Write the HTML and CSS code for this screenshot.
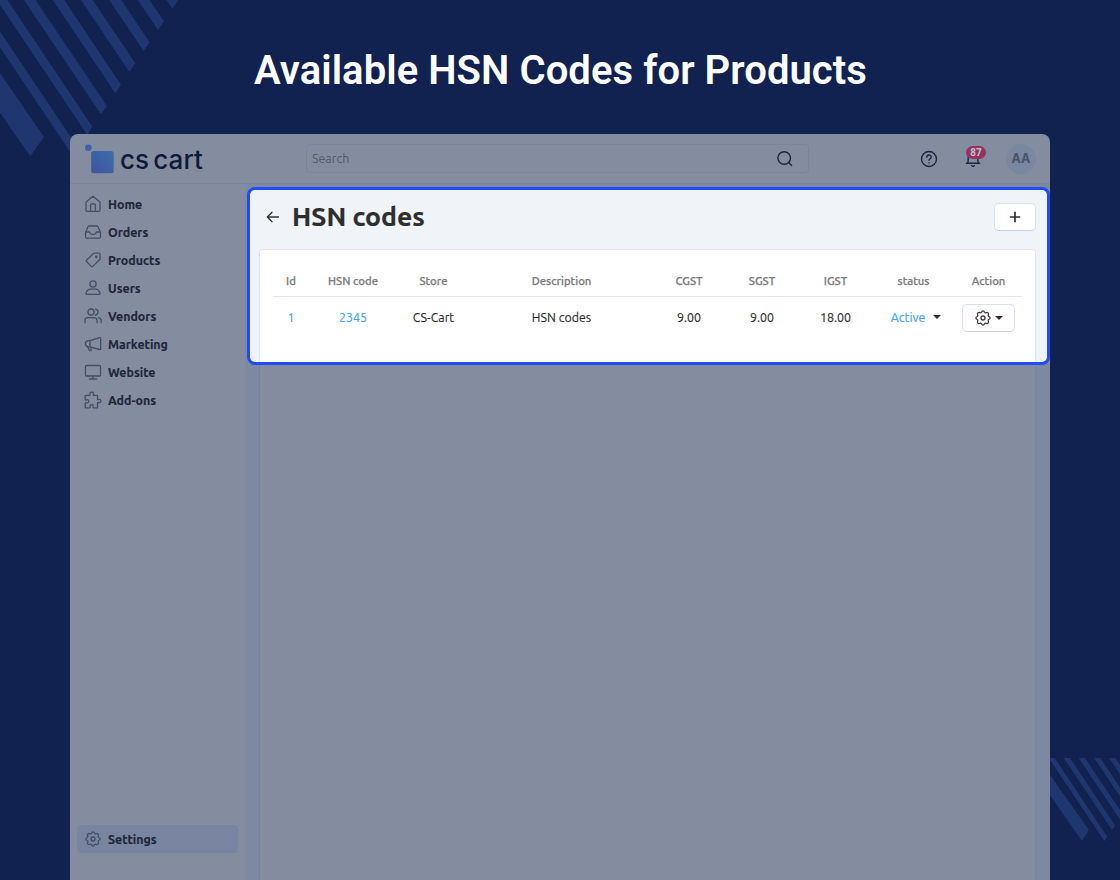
FILE: index.html
```html
<!DOCTYPE html>
<html lang="en">
<head>
<meta charset="utf-8">
<title>HSN codes</title>
<link rel="stylesheet" href="styles.css">
</head>
<body>
<svg class="stripes stripes-top" width="180" height="160" viewBox="0 0 540 480">
  <path d="M0 220 132 410 91 469 0 338ZM0 94 234 443 219 468 0 142ZM-10 0H22L277 380 262 405ZM72 0H107L321 318 303 343ZM158 0H193L363 254 346 280ZM243 0H278L406 190 388 216ZM328 0H364L449 127 431 153ZM413 0H449L492 64 474 90ZM499 0H535L517 26Z"/>
</svg>
<svg class="stripes stripes-bottom" width="70" height="84" viewBox="90 54 210 252">
  <path d="M90 104 207 270 186 303 90 165ZM86 54H104L262 290 253 303ZM131 54H150L286 257 276 270ZM176 54H195L310 225 299 237ZM222 54H241L334 193 325 206ZM267 54H286L358 160 349 173Z"/>
</svg>
<h1 class="headline">Available HSN Codes for Products</h1>
<div class="window">
  <header class="topbar">
    <div class="brand">
      <svg width="30" height="32" viewBox="0 0 30 32">
        <defs><linearGradient id="brand-fill" x1="0" y1="1" x2="1" y2="0"><stop offset="0" stop-color="#3f52a4"/><stop offset="1" stop-color="#3f6da5"/></linearGradient></defs>
        <circle cx="3.3" cy="4.7" r="3.3" fill="#3f60aa"/><rect x="6.2" y="8" width="22.5" height="22.3" rx="2.5" fill="url(#brand-fill)"/>
      </svg>
      <span class="brand-name">cs cart</span>
    </div>
    <div class="search"><span class="search-hint">Search</span>
      <svg class="icon ink" width="18" height="18" viewBox="0 0 18 18"><circle cx="8.2" cy="8" r="6.3"/><path d="m12.6 12.4 3 3"/></svg>
    </div>
    <div class="tools">
      <svg class="icon ink help" width="18" height="18" viewBox="0 0 18 18"><circle cx="9" cy="9" r="7.5"/><path d="M6.8 7.2C6.8 4.3 11.2 4.3 11.2 7.1 11.2 8.8 9 8.7 9 10.3M9 12.6v.3"/></svg>
      <div class="bell">
        <svg class="icon ink" width="18" height="18" viewBox="0 0 18 18"><path d="M2.4 13.2H15.6M3.7 13C4.4 11 4.2 9 4.2 7.5 4.2 1 13.8 1 13.8 7.5 13.8 9 13.6 11 14.3 13M7.7 15.8Q9 17 10.3 15.8"/></svg>
        <span class="badge">87</span>
      </div>
      <span class="avatar">AA</span>
    </div>
  </header>
  <div class="body">
    <aside class="sidebar">
      <nav class="menu">
        <div class="item"><svg class="icon" width="18" height="18" viewBox="0 0 18 18"><path d="M2 7.1 9 1.3 16 7.1V15.3Q16 16.3 15 16.3H3Q2 16.3 2 15.3ZM6.6 16V10Q6.6 9 7.6 9H10.4Q11.4 9 11.4 10V16"/></svg><span>Home</span></div>
        <div class="item"><svg class="icon" width="18" height="18" viewBox="0 0 18 18"><path d="M1.5 9.5 4 3.8Q4.4 3 5.3 3H12.7Q13.6 3 14 3.8L16.5 9.5V13.7Q16.5 15.2 15 15.2H3Q1.5 15.2 1.5 13.7ZM1.7 9H5.6Q6 11.4 9 11.4T12.4 9H16.3"/></svg><span>Orders</span></div>
        <div class="item"><svg class="icon" width="18" height="18" viewBox="0 0 18 18"><path d="M9.8 2.2H15Q16 2.2 16 3.2V8.2L8.8 15.4Q8 16.2 7.2 15.4L2.6 10.5Q1.8 9.7 2.6 8.9Z"/><circle cx="12.3" cy="5.8" r=".7"/></svg><span>Products</span></div>
        <div class="item"><svg class="icon" width="18" height="18" viewBox="0 0 18 18"><circle cx="9" cy="5" r="3.1"/><path d="M5.8 10.1H12.2Q15 10.6 16 14.1 16.1 15.4 14.9 15.4H3.1Q1.9 15.4 2 14.1 3 10.6 5.8 10.1Z"/></svg><span>Users</span></div>
        <div class="item"><svg class="icon" width="18" height="18" viewBox="0 0 18 18"><circle cx="7" cy="5.1" r="3.1"/><path d="M1 15.8V13.5Q1 10.6 4 10.6H10Q13 10.6 13 13.5V15.8M11.5 2.2Q14 2.6 14 5T11.5 8M14.5 10.7Q17.2 11.5 17.2 14V15.8"/></svg><span>Vendors</span></div>
        <div class="item"><svg class="icon" width="18" height="18" viewBox="0 0 18 18"><path d="M6 5.7 15.6 2.6Q16.7 2.4 16.7 3.5V13.7Q16.7 14.8 15.6 14.5L6 11.9M6 5.7H4.3Q1.4 6.4 1.4 8.8T4.3 11.9H6V5.7M3.7 12 5.3 15.2Q6.1 16.1 7.2 15.2L6.8 12.3"/></svg><span>Marketing</span></div>
        <div class="item"><svg class="icon" width="18" height="18" viewBox="0 0 18 18"><rect x="1.5" y="2.5" width="15" height="10.5" rx="1"/><path d="M9 13V16M5.3 16H12.7"/></svg><span>Website</span></div>
        <div class="item"><svg class="icon" width="18" height="18" viewBox="0 0 18 18"><path d="M1.2 4.4H5.7C6.7 3.5 5.5 3.1 6 2 6.5 .9 8.9 .9 9.4 2 9.9 3.1 8.7 3.5 9.7 4.4H13.5V8.4C14.5 9.2 15 7.9 16 8.4 17.2 9 17.2 11 16 11.6 15 12.1 14.5 10.9 13.5 11.8V16.8H9.4C8.5 15.9 9.4 15.4 9.2 14.6 8.9 13.4 6.6 13.4 6.1 14.5 5.7 15.4 6.9 15.9 5.9 16.8H1.2V12C2 11.1 2.5 12.1 3.6 11.9 5.2 11.6 5.2 9 3.6 8.7 2.5 8.5 2 9.6 1.2 8.7Z"/></svg><span>Add-ons</span></div>
      </nav>
      <div class="item settings"><svg class="icon" width="18" height="18" viewBox="0 0 18 18"><use href="#gear"/></svg><span>Settings</span></div>
    </aside>
    <main class="content">
      <section class="spotlight">
        <div class="page-head">
          <svg class="icon back" width="16" height="16" viewBox="0 0 16 16"><path d="M13.5 8H2.5M7 3.2 2.3 8 7 12.8"/></svg>
          <h2 class="page-title">HSN codes</h2>
          <button class="add"><svg width="12" height="12" viewBox="0 0 12 12"><path d="M6 .8V11.2M.8 6H11.2"/></svg></button>
        </div>
        <div class="card">
          <div class="row head">
            <span>Id</span><span>HSN code</span><span>Store</span><span>Description</span><span>CGST</span><span>SGST</span><span>IGST</span><span>status</span><span>Action</span>
          </div>
          <div class="row data">
            <span class="link">1</span><span class="link">2345</span><span>CS-Cart</span><span>HSN codes</span><span>9.00</span><span>9.00</span><span>18.00</span>
            <span class="status"><span class="link">Active</span><i class="caret"></i></span>
            <span><button class="action"><svg class="icon" width="18" height="18" viewBox="0 0 18 18"><g id="gear"><path d="M7.5 3.3Q8 1.9 9 1.9T10.5 3.3Q11 4.2 12 3.7 13.3 3 14.1 3.9T14.3 6Q13.8 7 14.7 7.5 16.1 8 16.1 9T14.7 10.5Q13.8 11 14.3 12 15 13.3 14.1 14.1T12 14.3Q11 13.8 10.5 14.7 10 16.1 9 16.1T7.5 14.7Q7 13.8 6 14.3 4.7 15 3.9 14.1T3.7 12Q4.2 11 3.3 10.5 1.9 10 1.9 9T3.3 7.5Q4.2 7 3.7 6 3 4.7 3.9 3.9T6 3.7Q7 4.2 7.5 3.3Z"/><circle cx="9" cy="9" r="2"/></g></svg><i class="caret"></i></button></span>
          </div>
        </div>
      </section>
      <div class="card-rest"></div>
    </main>
  </div>
</div>
</body>
</html>
```
FILE: styles.css
```css
* { box-sizing: border-box; }
body {
  margin: 0; height: 880px; overflow: hidden; position: relative;
  display: flex; flex-direction: column;
  background: #112150; font-family: Ubuntu, "Noto Sans", sans-serif;
}
.stripes { position: absolute; fill: #20366f; }
.stripes-top { left: 0; top: 0; }
.stripes-bottom { right: 0; top: 758px; }
.headline {
  margin: 0; height: 134px; padding: 47px 0 0 1px; text-align: center; color: #fff;
  font: 600 40px/48px Roboto, sans-serif; letter-spacing: .06px; white-space: nowrap;
}
.window {
  position: relative; flex: 1; width: 980px; margin: 0 auto; display: flex; flex-direction: column;
  background: #848da0; border-radius: 8px 8px 0 0; color: #1e263b;
}
.icon { fill: none; stroke: #454e65; stroke-width: 1.3; stroke-linejoin: round; stroke-linecap: round; flex: none; }
.ink { stroke: #1c2640; stroke-width: 1.4; }
.topbar { height: 50px; border-bottom: 1px solid #7885a0; display: flex; align-items: center; }
.brand { width: 236px; padding-left: 15px; display: flex; align-items: center; gap: 5px; }
.brand svg { margin-top: 1px; }
.brand-name { font: 500 26px/30px Inter, sans-serif; letter-spacing: .1px; word-spacing: -3px; color: #0f1a3a; margin-top: 2px; }
.search {
  width: 503px; height: 29px; padding: 0 14px 0 5px; display: flex; align-items: center; justify-content: space-between;
  border: 1px solid #7885a0; border-radius: 4px;
}
.search-hint { font-size: 12.4px; color: #515a6e; margin-top: -1px; }
.tools { flex: 1; display: flex; align-items: center; justify-content: flex-end; padding-right: 14px; }
.bell { position: relative; height: 18px; margin: 0 24px 0 26px; }
.badge {
  position: absolute; left: 2px; top: -4px; width: 20px; height: 13px; border-radius: 7px;
  background: #94315e; color: #b9bccb; font: 700 10px/13px "Noto Sans", sans-serif; text-align: center;
}
.avatar { width: 30px; height: 30px; border-radius: 50%; background: #7b87a0; color: #495167; font: 700 12.5px/30px Inter, sans-serif; text-align: center; }
.body { flex: 1; display: flex; min-height: 0; }
.sidebar { width: 175px; padding: 6px 7px 27px; display: flex; flex-direction: column; justify-content: space-between; }
.item { height: 28px; padding-left: 7px; display: flex; align-items: center; gap: 6.4px; font-size: 12.4px; font-weight: 700; border-radius: 4px; -webkit-text-stroke: .15px; }
.item .icon { margin-left: -.4px; }
.settings { width: 161px; background: #7884a0; }
.content { flex: 1; padding: 3px 0 0 2px; background: #7d88a1; display: flex; flex-direction: column; min-width: 0; }
.spotlight {
  height: 178px; border: 3px solid #204bf5; border-radius: 8px; overflow: hidden;
  background: #f0f4f9; padding: 0 11px 0 9px; display: flex; flex-direction: column; color: #2e2e2e;
}
.page-head { height: 59px; flex: none; display: flex; align-items: center; padding-left: 6px; }
.back { stroke: #333; margin-top: -6px; }
.page-title { margin: -7px auto 0 11px; font-size: 26.6px; line-height: 32px; font-weight: 700; -webkit-text-stroke: .2px; }
button { border: 1px solid #d9e1ef; border-bottom-color: #c5d0e5; border-radius: 5px; background: #fff; padding: 0; display: flex; align-items: center; justify-content: center; }
.add { width: 42px; height: 28px; margin-top: -6px; }
.add path { stroke: #2e2e2e; stroke-width: 1.7; }
.card { flex: 1; background: #fff; border: 1px solid #e1e7f1; border-bottom: 0; border-radius: 4px 4px 0 0; padding: 14px 13px 0; }
.row { display: grid; grid-template-columns: 36px 88px 73px 183px 72px 74px 73px 83px 67px; align-items: center; text-align: center; white-space: nowrap; }
.row > span { display: flex; justify-content: center; }
.head { height: 33px; border-bottom: 1px solid #e0e7f1; font-size: 11.3px; font-weight: 500; color: #7c7c7c; -webkit-text-stroke: .25px; }
.data { height: 42px; font-size: 12.4px; }
.data > span { margin-top: -3px; }
.data > span:last-child { margin-top: 0; }
.data > span:not(:last-child) { -webkit-text-stroke: .15px; }
.link { color: #3ba6f3; }
.row .status { align-items: center; gap: 8px; padding-left: 5px; }
.caret { border: 4px solid transparent; border-top-color: #2e2e2e; border-bottom: 0; }
.action { width: 53px; height: 28px; gap: 3px; }
.action .icon { stroke: #3a3a3a; }
.card-rest { flex: 1; margin: 0 14px 0 12px; background: #848da0; border: 1px solid #7883a0; border-width: 0 1px; }
```
